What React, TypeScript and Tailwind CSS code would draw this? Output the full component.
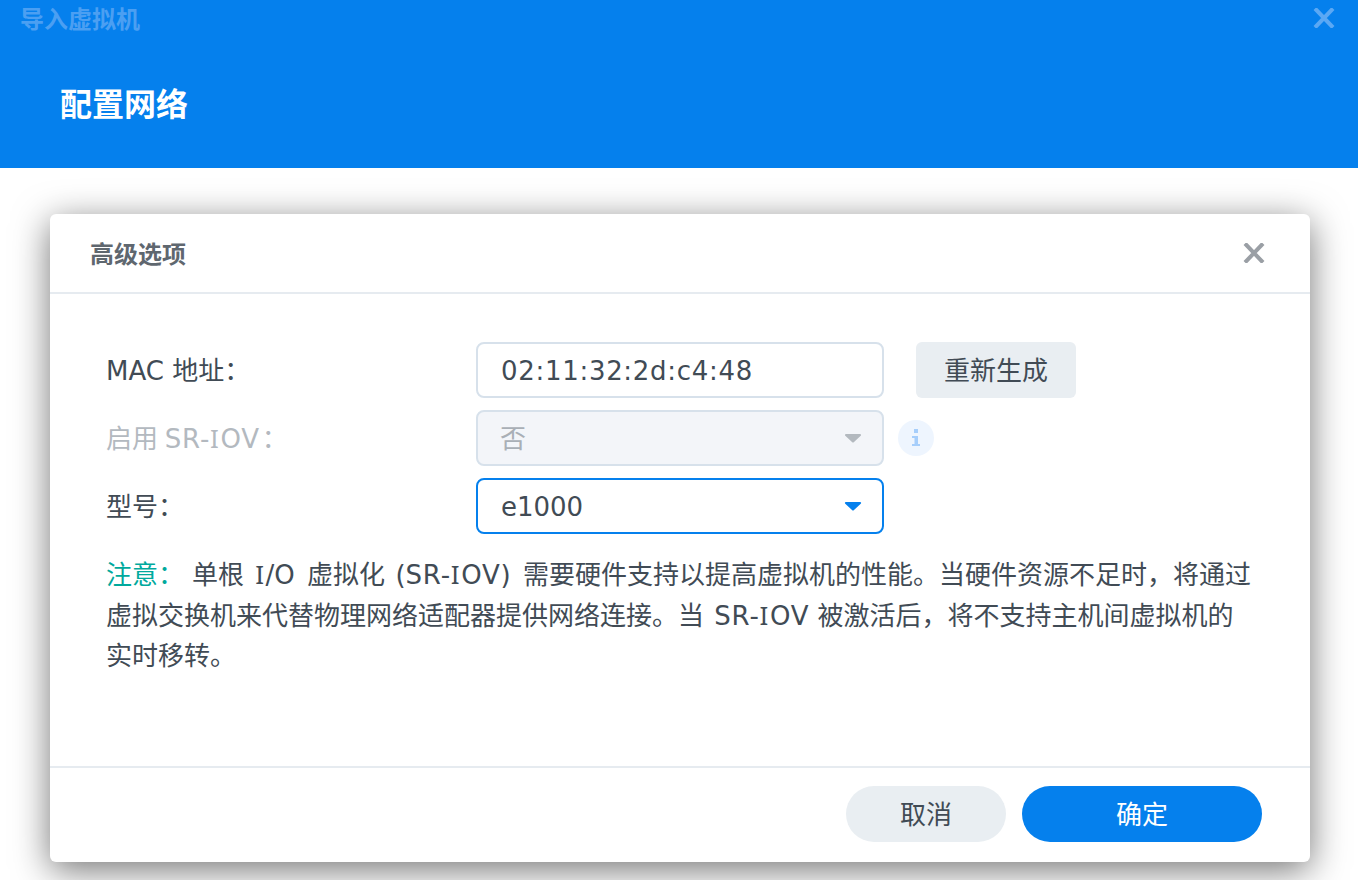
const FONT = "font-['Noto_Sans','Noto_Sans_CJK_SC',sans-serif]";
const LATIN = "font-['DejaVu_Sans','Noto_Sans_CJK_SC',sans-serif] leading-none";

function CloseIcon({ className }: { className: string }) {
  return (
    <svg viewBox="0 0 22 20" className={className} fill="none" stroke="currentColor" strokeWidth="4">
      <path d="M2 0.5 L20 19.5 M20 0.5 L2 19.5" />
    </svg>
  );
}

function Caret({ className }: { className: string }) {
  return (
    <svg viewBox="0 0 18 9" className={className} fill="currentColor">
      <path d="M1 1.5 Q0.5 0 2 0 H16 Q17.5 0 17 1.5 L10 8 Q9 9 8 8 Z" />
    </svg>
  );
}

// capital I in the reference has serifs, DejaVu's does not
function SerifI() {
  return <span className={`${FONT} leading-none tracking-[1.5px]`}>I</span>;
}

function SrIov() {
  return (
    <span className={`${LATIN} tracking-[0.8px]`}>
      SR-<SerifI />OV
    </span>
  );
}

function Row({ label, disabled, children }: { label: React.ReactNode; disabled?: boolean; children: React.ReactNode }) {
  return (
    <div className="flex items-center h-14">
      <div className={`w-[370px] pt-[1px] text-[26px] ${disabled ? "text-[#b3b9bf]" : "text-[#414b55]"}`}>{label}</div>
      {children}
    </div>
  );
}

export default function App() {
  return (
    <div className={`${FONT} h-[880px] bg-white overflow-hidden`}>
      {/* Wizard header */}
      <div className="h-[168px] bg-[#0580ed] relative">
        <div className="pl-5 pt-[1px] text-2xl leading-[36px] font-bold text-[#4b9ff2]">导入虚拟机</div>
        <div className="pl-[60px] pt-[43px] text-[32px] leading-[48px] font-bold text-white">配置网络</div>
        <CloseIcon className="absolute right-[23px] top-[8px] w-[22px] h-5 text-[#5ba8f4]" />
      </div>

      {/* Dialog */}
      <div className="ml-[50px] mt-[46px] w-[1260px] h-[648px] bg-white rounded-[6px] shadow-[0_8px_36px_rgba(0,0,0,0.55)] flex flex-col">
        <div className="h-20 shrink-0 border-b-2 border-[#e6ebf0] flex items-center justify-between pl-10 pr-[45px]">
          <div className="text-2xl font-bold text-[#5f676f] pt-[2px]">高级选项</div>
          <CloseIcon className="w-[22px] h-5 text-[#9a9fa5]" />
        </div>

        <div className="flex-1 pt-12 pl-[56px]">
          <div className="flex flex-col gap-3">
            <Row label={<><span className={LATIN}>MAC </span>地址：</>}>
              <div className={`${LATIN} w-[408px] h-14 border-2 border-[#d7e1eb] rounded-lg flex items-center pl-[23px] pt-[2px] text-[26px] tracking-[0.7px] text-[#414b55]`}>
                02:11:32:2d:c4:48
              </div>
              <button className="ml-8 w-40 h-14 bg-[#e9eef2] rounded-md text-[26px] text-[#414b55]">重新生成</button>
            </Row>
            <Row label={<>启用 <SrIov /><span className="ml-[2px]">：</span></>} disabled>
              <div className="w-[408px] h-14 border-2 border-[#d7e1eb] bg-[#f3f5f9] rounded-lg flex items-center justify-between pl-[22px] pr-[20px] text-[26px] text-[#a9afb6]">
                否
                <Caret className="w-[18px] h-[9px] text-[#b3b9bf]" />
              </div>
              <div className="ml-[14px] w-9 h-9 rounded-full bg-[#eef5fe] flex items-center justify-center">
                <svg viewBox="0 0 12 18" className="w-3 h-[18px]" fill="#a6cefb">
                  <path d="M4 0 H8 V4 H4 Z M2 7 H8 V15 H10 V17 H2 V15 H4.5 V9 H2 Z" />
                </svg>
              </div>
            </Row>
            <Row label="型号：">
              <div className="w-[408px] h-14 border-2 border-[#0580ed] rounded-lg flex items-center justify-between pl-[23px] pr-[20px] text-[26px] text-[#414b55]">
                <span className={`${LATIN} pt-[2px]`}>e1000</span>
                <Caret className="w-[18px] h-[9px] text-[#0580ed]" />
              </div>
            </Row>
          </div>

          <p className="mt-5 text-[26px] leading-[40.5px] text-[#414b55]">
            <span className="text-[#00a99d] mr-2">注意：</span>单根 <span className={`${LATIN} ml-[4.5px] mr-[5.5px]`}><SerifI />/O</span> 虚拟化 <span className={`${LATIN} ml-[3.5px]`}>(</span><SrIov /><span className={`${LATIN} mr-[5.5px]`}>)</span> 需要硬件支持以提高虚拟机的性能。当硬件资源不足时，将通过
            <br />
            虚拟交换机来代替物理网络适配器提供网络连接。当 <span className="ml-[3.5px] mr-[1.5px]"><SrIov /></span> 被激活后，将不支持主机间虚拟机的
            <br />
            实时移转。
          </p>
        </div>

        <div className="h-24 shrink-0 border-t-2 border-[#e6ebf0] flex justify-end gap-4 pr-12 pt-[18px]">
          <button className="w-40 h-14 rounded-[28px] bg-[#e9eef2] text-[26px] text-[#414b55]">取消</button>
          <button className="w-60 h-14 rounded-[28px] bg-[#0580ed] text-[26px] text-white">确定</button>
        </div>
      </div>
    </div>
  );
}
